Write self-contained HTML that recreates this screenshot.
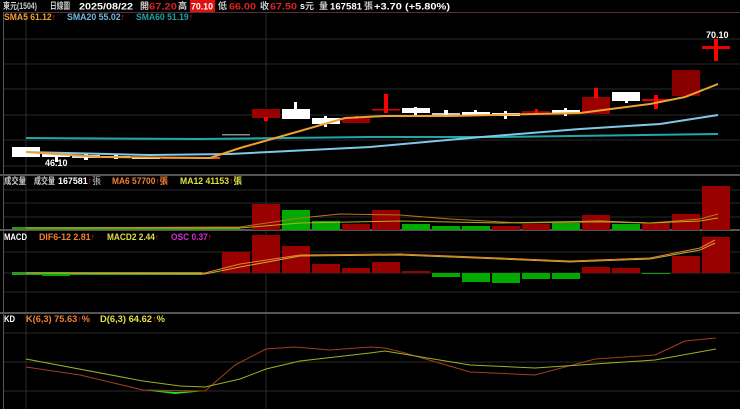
<!DOCTYPE html><html><head><meta charset="utf-8"><style>
html,body{margin:0;padding:0;background:#000;width:740px;height:409px;overflow:hidden}
svg{display:block}
text{font-family:"Liberation Sans","Noto Sans CJK TC",sans-serif;font-weight:bold;font-size:9px}
</style></head><body>
<svg width="740" height="409" viewBox="0 0 740 409" xmlns="http://www.w3.org/2000/svg">
<rect width="740" height="409" fill="#000"/>
<g stroke="#2a2a2a" stroke-width="1">
<line x1="4" y1="39" x2="740" y2="39"/><line x1="4" y1="64" x2="740" y2="64"/><line x1="4" y1="89" x2="740" y2="89"/><line x1="4" y1="115" x2="740" y2="115"/><line x1="4" y1="140" x2="740" y2="140"/><line x1="4" y1="166" x2="740" y2="166"/>
<line x1="4" y1="190" x2="740" y2="190"/><line x1="4" y1="203" x2="740" y2="203"/><line x1="4" y1="217" x2="740" y2="217"/>
<line x1="4" y1="252" x2="740" y2="252"/><line x1="4" y1="273" x2="740" y2="273"/><line x1="4" y1="292" x2="740" y2="292"/>
<line x1="4" y1="333" x2="740" y2="333"/><line x1="4" y1="362" x2="740" y2="362"/><line x1="4" y1="391" x2="740" y2="391"/>
<line x1="26" y1="12" x2="26" y2="409"/><line x1="266" y1="12" x2="266" y2="409"/>
</g>
<line x1="3.5" y1="12" x2="3.5" y2="409" stroke="#555"/>
<line x1="4" y1="12.5" x2="740" y2="12.5" stroke="#503040"/>
<g stroke="#555" stroke-width="2"><line x1="0" y1="175" x2="740" y2="175"/><line x1="0" y1="230" x2="740" y2="230"/><line x1="0" y1="313" x2="740" y2="313"/></g>
<g lengthAdjust="spacingAndGlyphs">
<text x="3" y="9" fill="#ccc" font-weight="normal" textLength="34" lengthAdjust="spacingAndGlyphs">東元(1504)</text>
<text x="50" y="9" fill="#ccc" font-weight="normal" textLength="20" lengthAdjust="spacingAndGlyphs">日線圖</text>
<text x="79" y="9.5" fill="#fff" font-size="11" textLength="54" lengthAdjust="spacingAndGlyphs">2025/08/22</text>
<text x="140" y="9" fill="#ccc" font-weight="normal">開</text>
<text x="149" y="9.5" fill="#e02020" font-size="11" textLength="28" lengthAdjust="spacingAndGlyphs">67.20</text>
<text x="178" y="9" fill="#ccc" font-weight="normal">高</text>
<rect x="190" y="0" width="25" height="12" fill="#e01010"/>
<text x="191" y="9.5" fill="#fff" font-size="11" textLength="22" lengthAdjust="spacingAndGlyphs">70.10</text>
<text x="218" y="9" fill="#ccc" font-weight="normal">低</text>
<text x="229" y="9.5" fill="#e02020" font-size="11" textLength="27" lengthAdjust="spacingAndGlyphs">66.00</text>
<text x="260" y="9" fill="#ccc" font-weight="normal">收</text>
<text x="270" y="9.5" fill="#e02020" font-size="11" textLength="27" lengthAdjust="spacingAndGlyphs">67.50</text>
<text x="300" y="9" fill="#fff">s</text><text x="305" y="9" fill="#ccc" font-weight="normal">元</text>
<text x="319" y="9" fill="#ccc" font-weight="normal">量</text>
<text x="330" y="9.5" fill="#fff" font-size="11" textLength="32" lengthAdjust="spacingAndGlyphs">167581</text>
<text x="364" y="9" fill="#ccc" font-weight="normal">張</text>
<text x="374" y="9.5" fill="#fff" font-size="10" textLength="76" lengthAdjust="spacingAndGlyphs">+3.70 (+5.80%)</text>
<text x="4" y="20" fill="#f0a030" textLength="52" lengthAdjust="spacingAndGlyphs">SMA5 61.12<tspan fill="#f02020">↑</tspan></text>
<text x="67" y="20" fill="#70b8e0" textLength="58" lengthAdjust="spacingAndGlyphs">SMA20 55.02<tspan fill="#f02020">↑</tspan></text>
<text x="136" y="20" fill="#20a0a0" textLength="57" lengthAdjust="spacingAndGlyphs">SMA60 51.19<tspan fill="#f02020">↑</tspan></text>
<text x="706" y="38" fill="#fff">70.10</text>
<text x="45" y="166" fill="#fff">46.10</text>
</g>
<g>
<rect x="12" y="147" width="28" height="10" fill="#fff"/>
<rect x="42" y="154" width="28" height="3" fill="#fff"/><rect x="55" y="154" width="3" height="8" fill="#fff"/>
<rect x="72" y="155" width="28" height="3" fill="#ddd"/><rect x="84" y="154" width="4" height="6" fill="#fff"/>
<rect x="102" y="156" width="28" height="2" fill="#ddd"/><rect x="114" y="155" width="4" height="4" fill="#fff"/>
<rect x="132" y="157" width="28" height="2" fill="#eee"/>
<rect x="162" y="157" width="28" height="2" fill="#c02020"/>
<rect x="192" y="157" width="28" height="2" fill="#d06020"/>
<rect x="222" y="134" width="28" height="1.5" fill="#888"/>
<rect x="252" y="109" width="28" height="9" fill="#900"/><rect x="264" y="117" width="4" height="4" fill="#f00"/>
<rect x="282" y="109" width="28" height="10" fill="#fff"/><rect x="294" y="102" width="3" height="8" fill="#fff"/>
<rect x="312" y="118" width="28" height="6" fill="#fff"/><rect x="324" y="116" width="3" height="11" fill="#fff"/>
<rect x="342" y="118" width="28" height="5" fill="#900"/><rect x="355" y="116" width="3" height="3" fill="#f00"/>
<rect x="372" y="109" width="28" height="1.5" fill="#d00"/><rect x="384" y="94" width="4" height="19" fill="#f00"/>
<rect x="402" y="108" width="28" height="5" fill="#fff"/><rect x="414" y="107" width="3" height="9" fill="#fff"/>
<rect x="432" y="113" width="28" height="2" fill="#ccc"/><rect x="444" y="110" width="4" height="6" fill="#fff"/>
<rect x="462" y="112" width="28" height="4" fill="#fff"/><rect x="474" y="110" width="3" height="3" fill="#fff"/>
<rect x="492" y="113" width="28" height="3" fill="#fff"/><rect x="504" y="111" width="3" height="8" fill="#fff"/>
<rect x="522" y="111" width="28" height="3" fill="#900"/><rect x="535" y="109" width="3" height="4" fill="#f00"/>
<rect x="552" y="110" width="28" height="4" fill="#fff"/><rect x="564" y="108" width="3" height="8" fill="#fff"/>
<rect x="582" y="97" width="28" height="17" fill="#900"/><rect x="594" y="88" width="4" height="10" fill="#f00"/>
<rect x="612" y="92" width="28" height="9" fill="#fff"/><rect x="625" y="100" width="3" height="3" fill="#fff"/>
<rect x="642" y="99" width="28" height="2" fill="#d00"/><rect x="654" y="95" width="4" height="14" fill="#f00"/>
<rect x="672" y="70" width="28" height="26" fill="#800"/>
<rect x="702" y="46" width="28" height="3" fill="#e00"/><rect x="714" y="39" width="4" height="22" fill="#f00"/>
</g>
<polyline fill="none" stroke="#20a8a8" stroke-width="2" points="26,138 200,139 370,137 500,137 718,134"/>
<polyline fill="none" stroke="#80c8e8" stroke-width="2" points="26,152 150,155 230,154 370,147 470,138 580,129 660,124 718,115"/>
<polyline fill="none" stroke="#f0a030" stroke-width="2" points="26,152 100,157 210,158 240,148 300,131 345,118 385,116 450,116 580,113 650,104 685,97 718,84"/>
<text x="4" y="184" fill="#ccc" font-weight="normal" font-size="8" textLength="22" lengthAdjust="spacingAndGlyphs">成交量</text>
<text x="34" y="184" fill="#ccc" font-weight="normal" font-size="8" textLength="21" lengthAdjust="spacingAndGlyphs">成交量</text>
<text x="58" y="184" fill="#fff" textLength="43" lengthAdjust="spacingAndGlyphs">167581<tspan fill="#f02020">↑</tspan><tspan fill="#ccc" font-weight="normal">張</tspan></text>
<text x="112" y="184" fill="#f08030" textLength="56" lengthAdjust="spacingAndGlyphs">MA6 57700<tspan fill="#f02020">↑</tspan>張</text>
<text x="180" y="184" fill="#e0e040" textLength="62" lengthAdjust="spacingAndGlyphs">MA12 41153<tspan fill="#f02020">↑</tspan>張</text>
<g>
<rect x="12" y="227" width="228" height="3" fill="#3a8a20"/>
<rect x="252" y="204" width="28" height="26" fill="#900"/>
<rect x="282" y="210" width="28" height="20" fill="#0a0"/>
<rect x="312" y="221" width="28" height="9" fill="#0a0"/>
<rect x="342" y="224" width="28" height="6" fill="#900"/>
<rect x="372" y="210" width="28" height="20" fill="#900"/>
<rect x="402" y="224" width="28" height="6" fill="#0a0"/>
<rect x="432" y="226" width="28" height="4" fill="#0a0"/>
<rect x="462" y="226" width="28" height="4" fill="#0a0"/>
<rect x="492" y="226" width="28" height="4" fill="#900"/>
<rect x="522" y="224" width="28" height="6" fill="#900"/>
<rect x="552" y="223" width="28" height="7" fill="#0a0"/>
<rect x="582" y="215" width="28" height="15" fill="#900"/>
<rect x="612" y="224" width="28" height="6" fill="#0a0"/>
<rect x="642" y="223" width="28" height="7" fill="#900"/>
<rect x="672" y="214" width="28" height="16" fill="#900"/>
<rect x="702" y="186" width="28" height="44" fill="#900"/>
</g>
<polyline fill="none" stroke="#c07020" stroke-width="1" points="26,228 240,227 300,218 340,214 400,215 450,219 520,223 600,222 650,223 700,219 718,214"/>
<polyline fill="none" stroke="#b0b020" stroke-width="1" points="26,228 240,228 300,223 400,221 500,223 600,221 650,223 700,221 718,218"/>
<text x="4" y="240" fill="#fff" textLength="23" lengthAdjust="spacingAndGlyphs">MACD</text>
<text x="39" y="240" fill="#f08030" textLength="56" lengthAdjust="spacingAndGlyphs">DIF6-12 2.81<tspan fill="#f02020">↑</tspan></text>
<text x="107" y="240" fill="#e0e040" textLength="52" lengthAdjust="spacingAndGlyphs">MACD2 2.44<tspan fill="#f02020">↑</tspan></text>
<text x="171" y="240" fill="#d030d0" textLength="41" lengthAdjust="spacingAndGlyphs">OSC 0.37<tspan fill="#f02020">↑</tspan></text>
<g>
<rect x="12" y="272" width="190" height="3" fill="#2a9a20"/>
<rect x="42" y="273" width="28" height="3" fill="#0a0"/>
<rect x="222" y="252" width="28" height="21" fill="#900"/>
<rect x="252" y="235" width="28" height="38" fill="#900"/>
<rect x="282" y="246" width="28" height="27" fill="#900"/>
<rect x="312" y="264" width="28" height="9" fill="#900"/>
<rect x="342" y="268" width="28" height="5" fill="#900"/>
<rect x="372" y="262" width="28" height="11" fill="#900"/>
<rect x="402" y="271" width="28" height="2" fill="#900"/>
<rect x="432" y="273" width="28" height="4" fill="#0a0"/>
<rect x="462" y="273" width="28" height="9" fill="#0a0"/>
<rect x="492" y="273" width="28" height="10" fill="#0a0"/>
<rect x="522" y="273" width="28" height="6" fill="#0a0"/>
<rect x="552" y="273" width="28" height="6" fill="#0a0"/>
<rect x="582" y="267" width="28" height="6" fill="#900"/>
<rect x="612" y="268" width="28" height="5" fill="#900"/>
<rect x="642" y="273" width="28" height="1" fill="#0a0"/>
<rect x="672" y="256" width="28" height="17" fill="#900"/>
<rect x="702" y="237" width="28" height="36" fill="#900"/>
</g>
<polyline fill="none" stroke="#f08030" stroke-width="1" points="26,273 205,273 240,264 300,255 400,254 500,258 570,261 650,258 700,248 715,240"/>
<polyline fill="none" stroke="#c0b030" stroke-width="1" points="26,273 205,274 240,267 300,256 400,255 500,259 570,262 650,259 700,250 715,243"/>
<text x="4" y="322" fill="#fff" textLength="11" lengthAdjust="spacingAndGlyphs">KD</text>
<text x="26" y="322" fill="#f08030" textLength="64" lengthAdjust="spacingAndGlyphs">K(6,3) 75.63<tspan fill="#f02020">↑</tspan>%</text>
<text x="100" y="322" fill="#e0e040" textLength="65" lengthAdjust="spacingAndGlyphs">D(6,3) 64.62<tspan fill="#f02020">↑</tspan>%</text>
<path d="M143,390 L175,392 L205,391 L175,394 Z" fill="#20e020"/>
<polyline fill="none" stroke="#a04020" stroke-width="1" points="26,367 80,375 143,390 205,391 235,365 266,349 295,347 330,350 370,347 385,348 405,353 470,372 535,375 595,359 655,355 685,341 716,338"/>
<polyline fill="none" stroke="#a0b020" stroke-width="1" points="26,359 143,381 180,386 205,387 240,379 266,369 300,361 370,353 385,351 470,365 535,368 655,360 716,349"/>
</svg>
</body></html>
